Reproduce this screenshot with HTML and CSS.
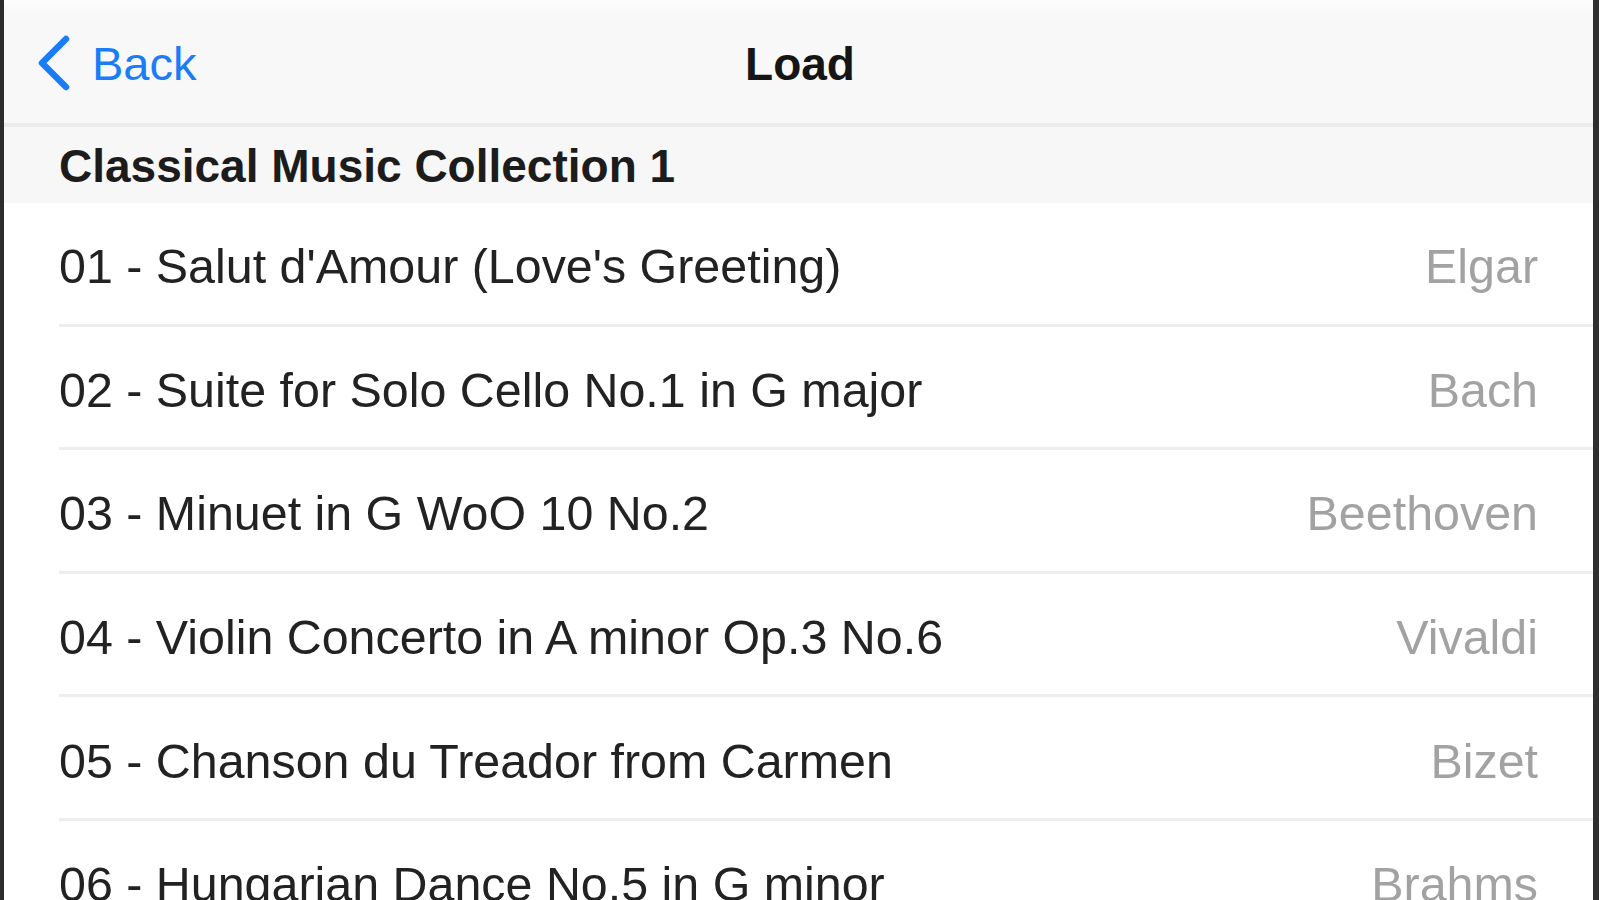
FILE: index.html
```html
<!DOCTYPE html>
<html lang="en">
<head>
<meta charset="utf-8">
<title>Load</title>
<link rel="stylesheet" href="styles.css">
</head>
<body>
<div class="screen">
  <header class="navbar">
    <a class="back" href="#">
      <svg class="chevron" width="40" height="60" viewBox="0 0 40 60" aria-hidden="true">
        <path d="M30 6 L6 30 L30 54" fill="none" stroke="#1a7df7" stroke-width="6.5" stroke-linecap="round" stroke-linejoin="round"/>
      </svg>
      <span>Back</span>
    </a>
    <h1 class="title">Load</h1>
    <div class="spacer"></div>
  </header>
  <div class="section-header">Classical Music Collection 1</div>
  <ul class="list">
    <li class="row"><span class="track">01 - Salut d'Amour (Love's Greeting)</span><span class="composer">Elgar</span></li>
    <li class="row"><span class="track">02 - Suite for Solo Cello No.1 in G major</span><span class="composer">Bach</span></li>
    <li class="row"><span class="track">03 - Minuet in G WoO 10 No.2</span><span class="composer">Beethoven</span></li>
    <li class="row"><span class="track">04 - Violin Concerto in A minor Op.3 No.6</span><span class="composer">Vivaldi</span></li>
    <li class="row"><span class="track">05 - Chanson du Treador from Carmen</span><span class="composer">Bizet</span></li>
    <li class="row"><span class="track">06 - Hungarian Dance No.5 in G minor</span><span class="composer">Brahms</span></li>
  </ul>
</div>
</body>
</html>
```

FILE: styles.css
```css
html, body {
  margin: 0;
  padding: 0;
  height: 100%;
  background: #ffffff;
  overflow: hidden;
}

body {
  font-family: "Liberation Sans", Arial, Helvetica, sans-serif;
}

.screen {
  display: flex;
  flex-direction: column;
  height: 900px;
  box-sizing: border-box;
  border-left: 4px solid #2c2c2c;
  border-right: 6px solid #2f2f2f;
  background: #ffffff;
  overflow: hidden;
}

.navbar {
  flex: none;
  height: 127px;
  box-sizing: border-box;
  display: grid;
  grid-template-columns: 1fr auto 1fr;
  align-items: center;
  background: linear-gradient(#fdfdfd 0px, #f8f8f8 12px, #f8f8f8 100%);
  border-bottom: 4px solid #ebebeb;
}

.back {
  display: flex;
  align-items: center;
  gap: 16px;
  padding-left: 32px;
  color: #1a7df7;
  text-decoration: none;
  font-size: 47px;
  padding-top: 4px;
}

.chevron {
  display: block;
  margin-top: -2px;
}

.title {
  margin: 0;
  font-size: 46px;
  font-weight: bold;
  color: #151515;
  padding-top: 4px;
  padding-left: 3px;
}

.section-header {
  flex: none;
  height: 76px;
  box-sizing: border-box;
  display: flex;
  align-items: center;
  padding-left: 55px;
  padding-top: 2px;
  background: #f7f7f7;
  font-size: 46px;
  font-weight: bold;
  color: #1c1c1c;
}

.list {
  list-style: none;
  margin: 0;
  padding: 0;
}

.row {
  display: flex;
  align-items: center;
  justify-content: space-between;
  height: 123.6px;
  box-sizing: border-box;
  margin-left: 55px;
  padding-right: 55px;
  padding-top: 6px;
  border-bottom: 3px solid #eeeeee;
  font-size: 48.4px;
}

.track {
  color: #222222;
  white-space: nowrap;
}

.composer {
  color: #a2a2a2;
  white-space: nowrap;
}
```
